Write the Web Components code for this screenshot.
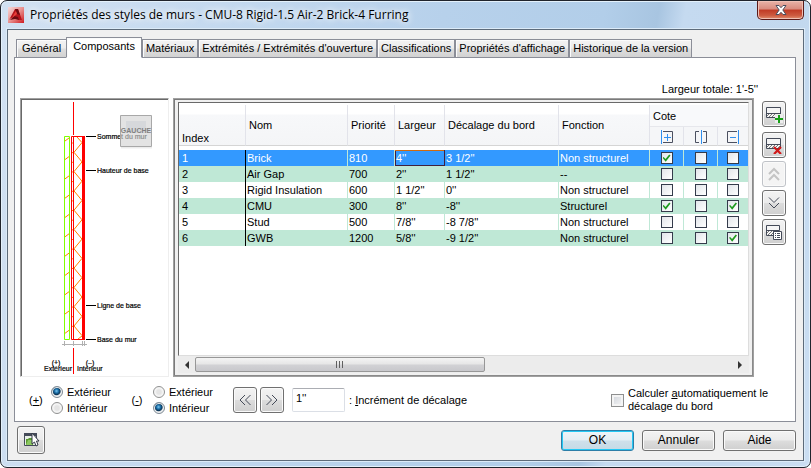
<!DOCTYPE html>
<html lang="fr">
<head>
<meta charset="utf-8">
<title>Propriétés des styles de murs</title>
<style>
html,body{margin:0;height:100%;background:#fff}
body{font:11px/16px "Liberation Sans",Arial,sans-serif;color:#000}
</style>
</head>
<body>
<style-dialog></style-dialog>
<script>
const base = `*{box-sizing:border-box}button,input{font:inherit;color:inherit;margin:0}
button{padding:0;cursor:default}`;

function define(name, html, setup) {
  const t = document.createElement('template');
  t.innerHTML = html;
  customElements.define(name, class extends HTMLElement {
    connectedCallback() {
      if (this.shadowRoot) return;
      this.attachShadow({mode: 'open'}).append(t.content.cloneNode(true));
      if (setup) setup.call(this, this.shadowRoot);
    }
  });
}

/* Square tool button; the icon is slotted. */
define('tool-button', `<style>${base}
:host{display:block;width:24px;height:26px}
button{width:100%;height:100%;display:flex;align-items:center;justify-content:center;border:1px solid #707070;border-radius:3px;
background:linear-gradient(#f3f3f3,#ebebeb 48%,#dcdcdc 52%,#cfcfcf);box-shadow:inset 0 0 0 1px #fafafa}
button:disabled{border-color:#c0c3c8;background:#f4f4f4}
</style><button type="button"><slot></slot></button>`, function (r) {
  const b = r.querySelector('button');
  b.setAttribute('aria-label', this.getAttribute('label'));
  b.disabled = this.hasAttribute('off');
});

define('push-button', `<style>${base}
:host{display:block;width:73px;height:21px;font-size:12px}
button{width:100%;height:100%;line-height:17px;border:1px solid #707070;border-radius:3px;
background:linear-gradient(#f3f3f3,#ebebeb 48%,#dddddd 52%,#cfcfcf);box-shadow:inset 0 0 0 1px #fafafa}
:host([primary]) button{border-color:#2c7ea8;background:linear-gradient(#eef5f9,#e4eef4 48%,#cfe0ea 52%,#c5dae6);box-shadow:inset 0 0 0 1px #24c8f4}
</style><button type="button"><slot></slot></button>`);

/* Window frame with title bar. */
define('window-frame', `<style>${base}
:host{display:flex;flex-direction:column;min-height:100vh;box-sizing:border-box;border:1px solid #20242c;border-radius:7px;
padding:0 6px 6px;background:linear-gradient(100deg,#d2e1f2 0,#c4d9ef 25%,#b7d1eb 50%,#b2cee9 68%,#a8c5e1 74%,#c5daf0 77%,#c2d8ee 90%,#cbdef2);
box-shadow:inset 0 0 0 1px #e4f1fb}
header{display:flex;align-items:center;height:28px;gap:6px;padding-left:1px}
header svg{flex:none}
h1{font:12px/18px "Open Sans","Noto Sans",sans-serif;margin:0;flex:1;white-space:nowrap;text-shadow:0 0 6px #fff,0 0 8px #fff}
.close{align-self:flex-start;width:47px;height:19px;border:1px solid #5a1a18;border-top:0;border-radius:0 0 5px 5px;
background:linear-gradient(#e9b3a8,#d98b7e 45%,#c03a25 50%,#cd5a40 80%,#e08f70);box-shadow:inset 0 0 0 1px #efc0b5;display:flex;align-items:center;justify-content:center}
main{flex:1;display:flex;flex-direction:column;border:1px solid #5d6b7a;background:#f0f0f0;padding:7px 7px 6px 6px;box-shadow:0 0 0 1px #dcebf8}
</style>
<header>
<svg width="16" height="16" viewBox="0 0 16 16"><defs><linearGradient id="g" x1="0" x2="1" y2="1"><stop stop-color="#f8dcdc"/><stop offset=".5" stop-color="#e9908e"/><stop offset="1" stop-color="#cf1b20"/></linearGradient></defs>
<path fill="url(#g)" d="M0 0h16v16H0z"/><path fill="#b5121b" d="M1 13 7 2h3l4 11h-4l-1-3-6 1z"/><path fill="#6d0a10" d="M7 2h3l2 6-3-1zM2 13l4-4 4 1 1 3-4-1z"/><path fill="#e8403a" d="m6 7 2-3 1 3-5 4z"/></svg>
<h1><slot name="title"></slot></h1>
<button class="close" type="button" aria-label="Fermer"><svg width="12" height="10" viewBox="0 0 12 10"><path d="M1 .5h3l2 2.200L8 .5h3L7.800 5 11 9.500H8L6 7.300 4 9.500H1L4.200 5z" fill="#fff" stroke="#4a4f60"/></svg></button>
</header><main><slot></slot></main>`);

define('tab-strip', `<style>${base}
:host{display:flex;align-items:flex-end;height:21px;padding-left:2px;position:relative;z-index:1;margin-bottom:-1px}
button{flex:none;white-space:nowrap;height:19px;line-height:17px;padding:0 3px;border:1px solid #8b8e98;
background:linear-gradient(#f3f3f3,#ececec 48%,#dedede 52%,#d2d2d2);box-shadow:inset 1px 1px #fbfbfb}
button:first-child{padding:0 5px}
button.on{height:21px;line-height:17px;padding:0 6px 2px;margin:0 0 0 -1px;background:#fff;border-bottom-color:#fff}
</style>`, function (r) {
  const on = this.getAttribute('active');
  const list = document.createElement('div');
  list.setAttribute('role', 'tablist');
  list.style.display = 'contents';
  this.getAttribute('tabs').split('|').forEach(t => {
    const b = document.createElement('button');
    b.type = 'button'; b.textContent = t; b.setAttribute('role', 'tab');
    b.setAttribute('aria-selected', t === on);
    if (t === on) b.className = 'on';
    list.append(b);
  });
  r.append(list);
});

/* Wall section drawing with its level labels. */
define('wall-preview', `<style>
:host{display:block;box-sizing:border-box;border:1px solid #a0a0a0;border-right-color:#eee;border-bottom-color:#eee;box-shadow:inset 1px 1px #696969;background:#fff}
svg{display:block}text{font:7px "Liberation Sans",Arial,sans-serif;fill:#000;stroke:#000;stroke-width:.2}
</style><svg width="147" height="277" viewBox="21 99 147 277"></svg>`, function (r) {
  let s = '', d = '';
  let path = 'M77 137l5 5.600';
  for (let k = 0; k < 10; k++) {
    const y = 152.300 + 19.300 * k;
    path += `L74 ${y}L82 ${y + 9.600}`;
    d += `M65 ${y + 7.300}l4-3`;
  }
  for (let k = 0; k < 20; k++) s += `M72 ${143 + 9.650 * k}h2`;
  path += 'M78 339l4-3';
  const lab = (y, t) => `<path d="M86 ${y + .5}h10" stroke="#000"/><text x="97" y="${y + 3}">${t}</text>`;
  r.querySelector('svg').innerHTML = `
<g fill="none" stroke="#ff8000"><path d="M65 141l4-3${d}${s}"/><path d="${path}"/></g>
<path d="M64.500 136.500h5v203h-5z" fill="none" stroke="#80ff00"/>
<path d="M71.500 136.500h12v203h-12zM73.500 136v203" fill="none" stroke="red"/><path d="M82 136h3v204h-3z" fill="red"/>
<path d="M73.500 102v33M73.500 348v26" stroke="red"/>
<path d="M62 344.500h25M64.500 341v5M73.500 341v5M82.500 341v5M84.500 341v5" stroke="#b0b0b0"/>
${lab(136, 'Sommet du mur')}${lab(170, 'Hauteur de base')}${lab(305, 'Ligne de base')}${lab(339, 'Base du mur')}
<text x="56" y="365" text-anchor="middle">(+)</text><text x="90" y="365" text-anchor="middle">(–)</text>
<text x="44" y="371">Extérieur</text><text x="77" y="371">Intérieur</text>
<g><path d="M121 147h31v1.500h-31z" fill="#ececec"/><path d="M120.500 115.500h31v31h-31z" fill="#d4d4d4" fill-opacity=".65" stroke="#a8a8a8"/><path d="M126 121h20v12h-20z" fill="#cdd0d6" fill-opacity=".6"/>
<text x="136" y="133" text-anchor="middle" style="font-weight:bold;fill:#808080;stroke:none">GAUCHE</text></g>`;
});

define('component-table', `<style>${base}
:host{display:flex;flex-direction:column;border:1px solid #a0a0a0;box-sizing:border-box;padding:3px 4px;background:#f0f0f0;box-shadow:inset -1px -1px #8a8a8a,inset 1px 1px #7a7a7a}
.view{flex:1;background:#fff;border:1px solid #696969;border-right-color:#ddd;border-bottom-color:#ddd;padding-top:2px}
table{width:100%;table-layout:fixed;border-collapse:separate;border-spacing:0}
th{font-weight:normal;text-align:left;padding:0 0 0 3px;height:22px;border-right:1px solid #e2e3ea;white-space:nowrap;
background:linear-gradient(#fff,#fff 9px,#f7f8fa 10px,#f4f5f7);border-bottom:1px solid #d5d5d5}
th.i{vertical-align:bottom;line-height:13px}
th.c{background:#f8f9fb;border-bottom-color:#e6e7ec}
th.h{height:19px;text-align:center;padding:1px 0 0;background:#f5f6f8}th svg{display:block;margin:auto}
th:last-child{border-right:0}
td{height:16px;line-height:16px;padding:0 0 0 1px;white-space:nowrap;border-right:1px solid #bfe8d6}
td:first-child{border-right-color:#000;padding-left:3px}
td:last-child{border-right:0}
tbody tr:nth-child(odd) td{background:#bfe8d6}
tbody tr:nth-child(even) td{background:#fff}
tbody tr.gap td{background:#fff;height:4px;line-height:0;padding:0}
tbody tr.sel td{background:#3399ff;color:#fff}
tbody tr.sel td.cur{box-shadow:inset 0 1px #cf6a10,inset 1px -1px #402040;border-right-color:#402040}
td.k{padding:0;text-align:center}
td input{appearance:none;display:block;margin:0 auto;width:12px;height:12px;border:1px solid #343b4b;background:linear-gradient(135deg,#e2e5ea,#fff);position:relative}
td input:checked::before{content:"";position:absolute;inset:1px;background:#1f9a1f;clip-path:polygon(0 48%,14% 38%,38% 62%,84% 6%,100% 20%,40% 98%)}
.bar{height:17px;display:flex;align-items:center;background:#ececec}
.bar button{border:0;background:none;width:17px;height:16px;display:grid;place-items:center}
.track{flex:1}
.thumb{width:54%;height:15px;border:1px solid #979797;border-radius:2px;background:linear-gradient(#f4f4f4,#e6e6e6 48%,#d2d2d5 52%,#c8c8cc);display:grid;place-items:center}
</style>
<div class="view"><table id="rows"><colgroup><col style="width:67px"><col style="width:102px"><col style="width:47px"><col style="width:50px"><col style="width:114px"><col style="width:91px"><col style="width:34px"><col style="width:34px"><col></colgroup>
<thead><tr><th rowspan="2" class="i">Index</th><th rowspan="2">Nom</th><th rowspan="2">Priorité</th><th rowspan="2">Largeur</th><th rowspan="2">Décalage du bord</th><th rowspan="2">Fonction</th><th colspan="3" class="c">Cote</th></tr>
<tr><th class="h" aria-label="Extérieur"><svg width="14" height="14" viewBox="0 0 14 14" fill="none"><path d="M3 1.500h9.500v11H3" stroke="#4b5060"/><path d="M1.500 0v14M4 7.500h7M7.500 4v7" stroke="#2f8fef"/></svg></th>
<th class="h" aria-label="Centre"><svg width="14" height="14" viewBox="0 0 14 14" fill="none"><path d="M5 1.500H1.500v11H5M9 1.500h3.500v11H9" stroke="#4b5060"/><path d="M7.500 0v14" stroke="#2f8fef"/></svg></th>
<th class="h" aria-label="Intérieur"><svg width="14" height="14" viewBox="0 0 14 14" fill="none"><path d="M11 1.500H1.500v11H11" stroke="#4b5060"/><path d="M12.500 0v14M4 7.500h6" stroke="#2f8fef"/></svg></th></tr></thead>
<tbody><tr class="gap"><td colspan="9"></td></tr></tbody></table></div>
<div class="bar"><button type="button" aria-label="Défiler à gauche"><svg width="5" height="8"><path d="M5 0v8L1 4z" fill="#333"/></svg></button>
<div class="track"><div class="thumb" role="scrollbar" aria-orientation="horizontal" aria-valuenow="0" aria-controls="rows"><svg width="9" height="7"><path d="M1.500 0v7M4.500 0v7M7.500 0v7" stroke="#606060"/></svg></div></div>
<button type="button" aria-label="Défiler à droite"><svg width="5" height="8"><path d="M0 0v8l4-4z" fill="#333"/></svg></button></div>`, function (r) {
  const rows = [
    ['1', 'Brick', '810', `4''`, `3 1/2''`, 'Non structurel', '100'],
    ['2', 'Air Gap', '700', `2''`, `1 1/2''`, '--', '000'],
    ['3', 'Rigid Insulation', '600', `1 1/2''`, `0''`, 'Non structurel', '000'],
    ['4', 'CMU', '300', `8''`, `-8''`, 'Structurel', '101'],
    ['5', 'Stud', '500', `7/8''`, `-8 7/8''`, 'Non structurel', '000'],
    ['6', 'GWB', '1200', `5/8''`, `-9 1/2''`, 'Non structurel', '001']];
  r.querySelector('tbody').insertAdjacentHTML('beforeend', rows.map((w, n) => `<tr${n ? '' : ' class="sel"'}>` +
    w.slice(0, 6).map((v, i) => `<td${!n && i === 3 ? ' class="cur"' : ''}>${v}</td>`).join('') +
    [...w[6]].map((c, i) => `<td class="k"><input type="checkbox" aria-label="${w[1]} – ${['extérieur', 'centre', 'intérieur'][i]}"${c === '1' ? ' checked' : ''}></td>`).join('') + '</tr>').join(''));
});

/* Pair of radios choosing the side of an offset. */
define('side-choice', `<style>${base}
:host{display:flex;align-items:center;gap:10px}
.s{width:12px;text-align:center;line-height:16px;white-space:nowrap}
.o{display:flex;flex-direction:column}
label{display:flex;align-items:center;gap:4px;height:16px}
input{appearance:none;width:12px;height:12px;border-radius:50%;border:1px solid #8e8f8f;background:radial-gradient(#e4e4e4 30%,#fff 70%);box-shadow:inset 0 0 0 1px #f4f4f4}
input:checked{border-color:#7e8a94;background:radial-gradient(circle at 45% 40%,#7cc8f0 0,#1a6ea8 25%,#0b3556 45%,#e0e4e8 58%)}
</style><span class="s"></span><div class="o" role="radiogroup"><label><input type="radio" name="s" value="e"><span>Extérieur</span></label><label><input type="radio" name="s" value="i"><span>Intérieur</span></label></div>`, function (r) {
  const sign = this.getAttribute('sign');
  r.querySelector('.s').innerHTML = `(<u>${sign}</u>)`;
  r.querySelector('.o').setAttribute('aria-label', sign);
  r.querySelector(`[value=${this.getAttribute('value')}]`).checked = true;
});

const slab = `<path d="M1.500 1.500h14v10h-14z" fill="#f5f5f5" stroke="#444a58"/><path d="M2 7.500h13" stroke="#444a58"/><path d="M2 10l2-2M4 11l3-3M7 11l3-3M10 11l3-3M13 11l2-2" stroke="#777"/>`;
define('style-dialog', `<style>${base}
:host{display:block}
.panel{flex:1;display:flex;flex-direction:column;border:1px solid #8b8e98;background:#fff;padding:24px 9px 3px 5px}
.total{text-align:right;line-height:15px;padding-right:28px;margin-bottom:1px}
.work{flex:1;display:flex;gap:4px}
wall-preview{flex:none}
component-table{flex:1}
.tools{display:flex;flex-direction:column;gap:3px;padding-top:3px;margin-left:4px}
.tools tool-button:nth-child(2){margin:2px 0 0}
.opts{display:flex;align-items:center;padding:5px 0 0 9px;height:41px}
.opts side-choice{width:102px}
.opts tool-button+tool-button{margin-left:3px}
.inc{display:flex;align-items:center;gap:4px;margin-left:8px}
.inc input{width:53px;height:24px;border:1px solid #dbdfe6;border-top-color:#abadb3;border-radius:2px;padding:0 3px 4px;background:#fff}
.auto{display:flex;align-items:center;gap:4px;margin-left:auto;line-height:13px;padding-right:18px;white-space:nowrap}
.auto input{appearance:none;width:13px;height:13px;border:1px solid #8e8f8f;background:linear-gradient(135deg,#cfd3da,#f6f6f6);box-shadow:inset 0 0 0 2px #f4f4f4}
footer{display:flex;align-items:center;gap:8px;padding:4px 0 0 3px}
footer tool-button{width:28px;height:28px;margin-right:auto}
</style>
<window-frame><span slot="title">Propriétés des styles de murs - CMU-8 Rigid-1.5 Air-2 Brick-4 Furring</span>
<tab-strip active="Composants" tabs="Général|Composants|Matériaux|Extrémités / Extrémités d'ouverture|Classifications|Propriétés d'affichage|Historique de la version"></tab-strip>
<section class="panel">
<div class="total">Largeur totale: 1'-5''</div>
<div class="work"><wall-preview></wall-preview><component-table></component-table>
<div class="tools">
<tool-button label="Ajouter"><svg width="18" height="17" viewBox="0 0 18 17">${slab}<path d="M10 8h8v9h-8z" fill="#ececec"/><path d="M14 9v8M10 13h8" stroke="#18a018" stroke-width="2"/></svg></tool-button>
<tool-button label="Supprimer"><svg width="18" height="17" viewBox="0 0 18 17">${slab}<path d="M9 10l7 7M16 10l-7 7" stroke="#d01818" stroke-width="2.200"/></svg></tool-button>
<tool-button label="Monter" off><svg width="12" height="14" viewBox="0 0 12 14" fill="none" stroke="#c4c4c4" stroke-width="2"><path d="M1 7l5-5 5 5M1 13l5-5 5 5"/></svg></tool-button>
<tool-button label="Descendre"><svg width="12" height="12" viewBox="0 0 12 12" fill="none" stroke="#444a58"><path d="M1 .500l5 5 5-5"/><path d="M1 6l5 5 5-5"/></svg></tool-button>
<tool-button label="Modifier"><svg width="18" height="17" viewBox="0 0 18 17"><path d="M1.500 1.500h13v5h-6v5h-7z" fill="#f5f5f5" stroke="#444a58"/><path d="M2 6.500h12" stroke="#444a58"/><path d="M2 9l2-2M3 11l4-4M6 11l2-2" stroke="#777"/><path d="M8.500 7.500h8v8h-8z" fill="#fff" stroke="#444a58"/><path d="M10 9.500h1M12 9.500h3M10 11.500h1M12 11.500h3M10 13.500h1M12 13.500h3" stroke="#444a58"/></svg></tool-button>
</div></div>
<div class="opts"><side-choice sign="+" value="e"></side-choice><side-choice sign="-" value="i"></side-choice>
<tool-button label="Diminuer"><svg width="12" height="12" viewBox="0 0 12 12" fill="none" stroke="#444a58"><path d="M6 1L1 6l5 5M11.500 1l-5 5 5 5"/></svg></tool-button>
<tool-button label="Augmenter"><svg width="12" height="12" viewBox="0 0 12 12" fill="none" stroke="#444a58"><path d="M.500 1l5 5-5 5M6 1l5 5-5 5"/></svg></tool-button>
<div class="inc"><input id="inc" value="1''"><label for="inc">: <u>I</u>ncrément de décalage</label></div>
<div class="auto"><input type="checkbox" id="auto"><label for="auto">Calculer <u>a</u>utomatiquement le<br>décalage du bord</label></div>
</div></section>
<footer><tool-button label="Options"><svg width="17" height="16" viewBox="0 0 17 16"><path d="M1.500 1.500h12v12h-12z" fill="#e8eee8" stroke="#444a58"/><path d="M1 1h13v3H1z" fill="#444a58"/><path d="M3 7h2l1-1h4v7H3z" fill="#5a9a30"/><path d="M5 8h6l-2 5H3z" fill="#8cc860"/><path d="M9 1v11l2.500-2 1.500 4 2-1-1.500-4H16z" fill="#fff" stroke="#343a48"/></svg></tool-button>
<push-button primary>OK</push-button><push-button>Annuler</push-button><push-button>Aide</push-button></footer>
</window-frame>`);
</script>
</body>
</html>
